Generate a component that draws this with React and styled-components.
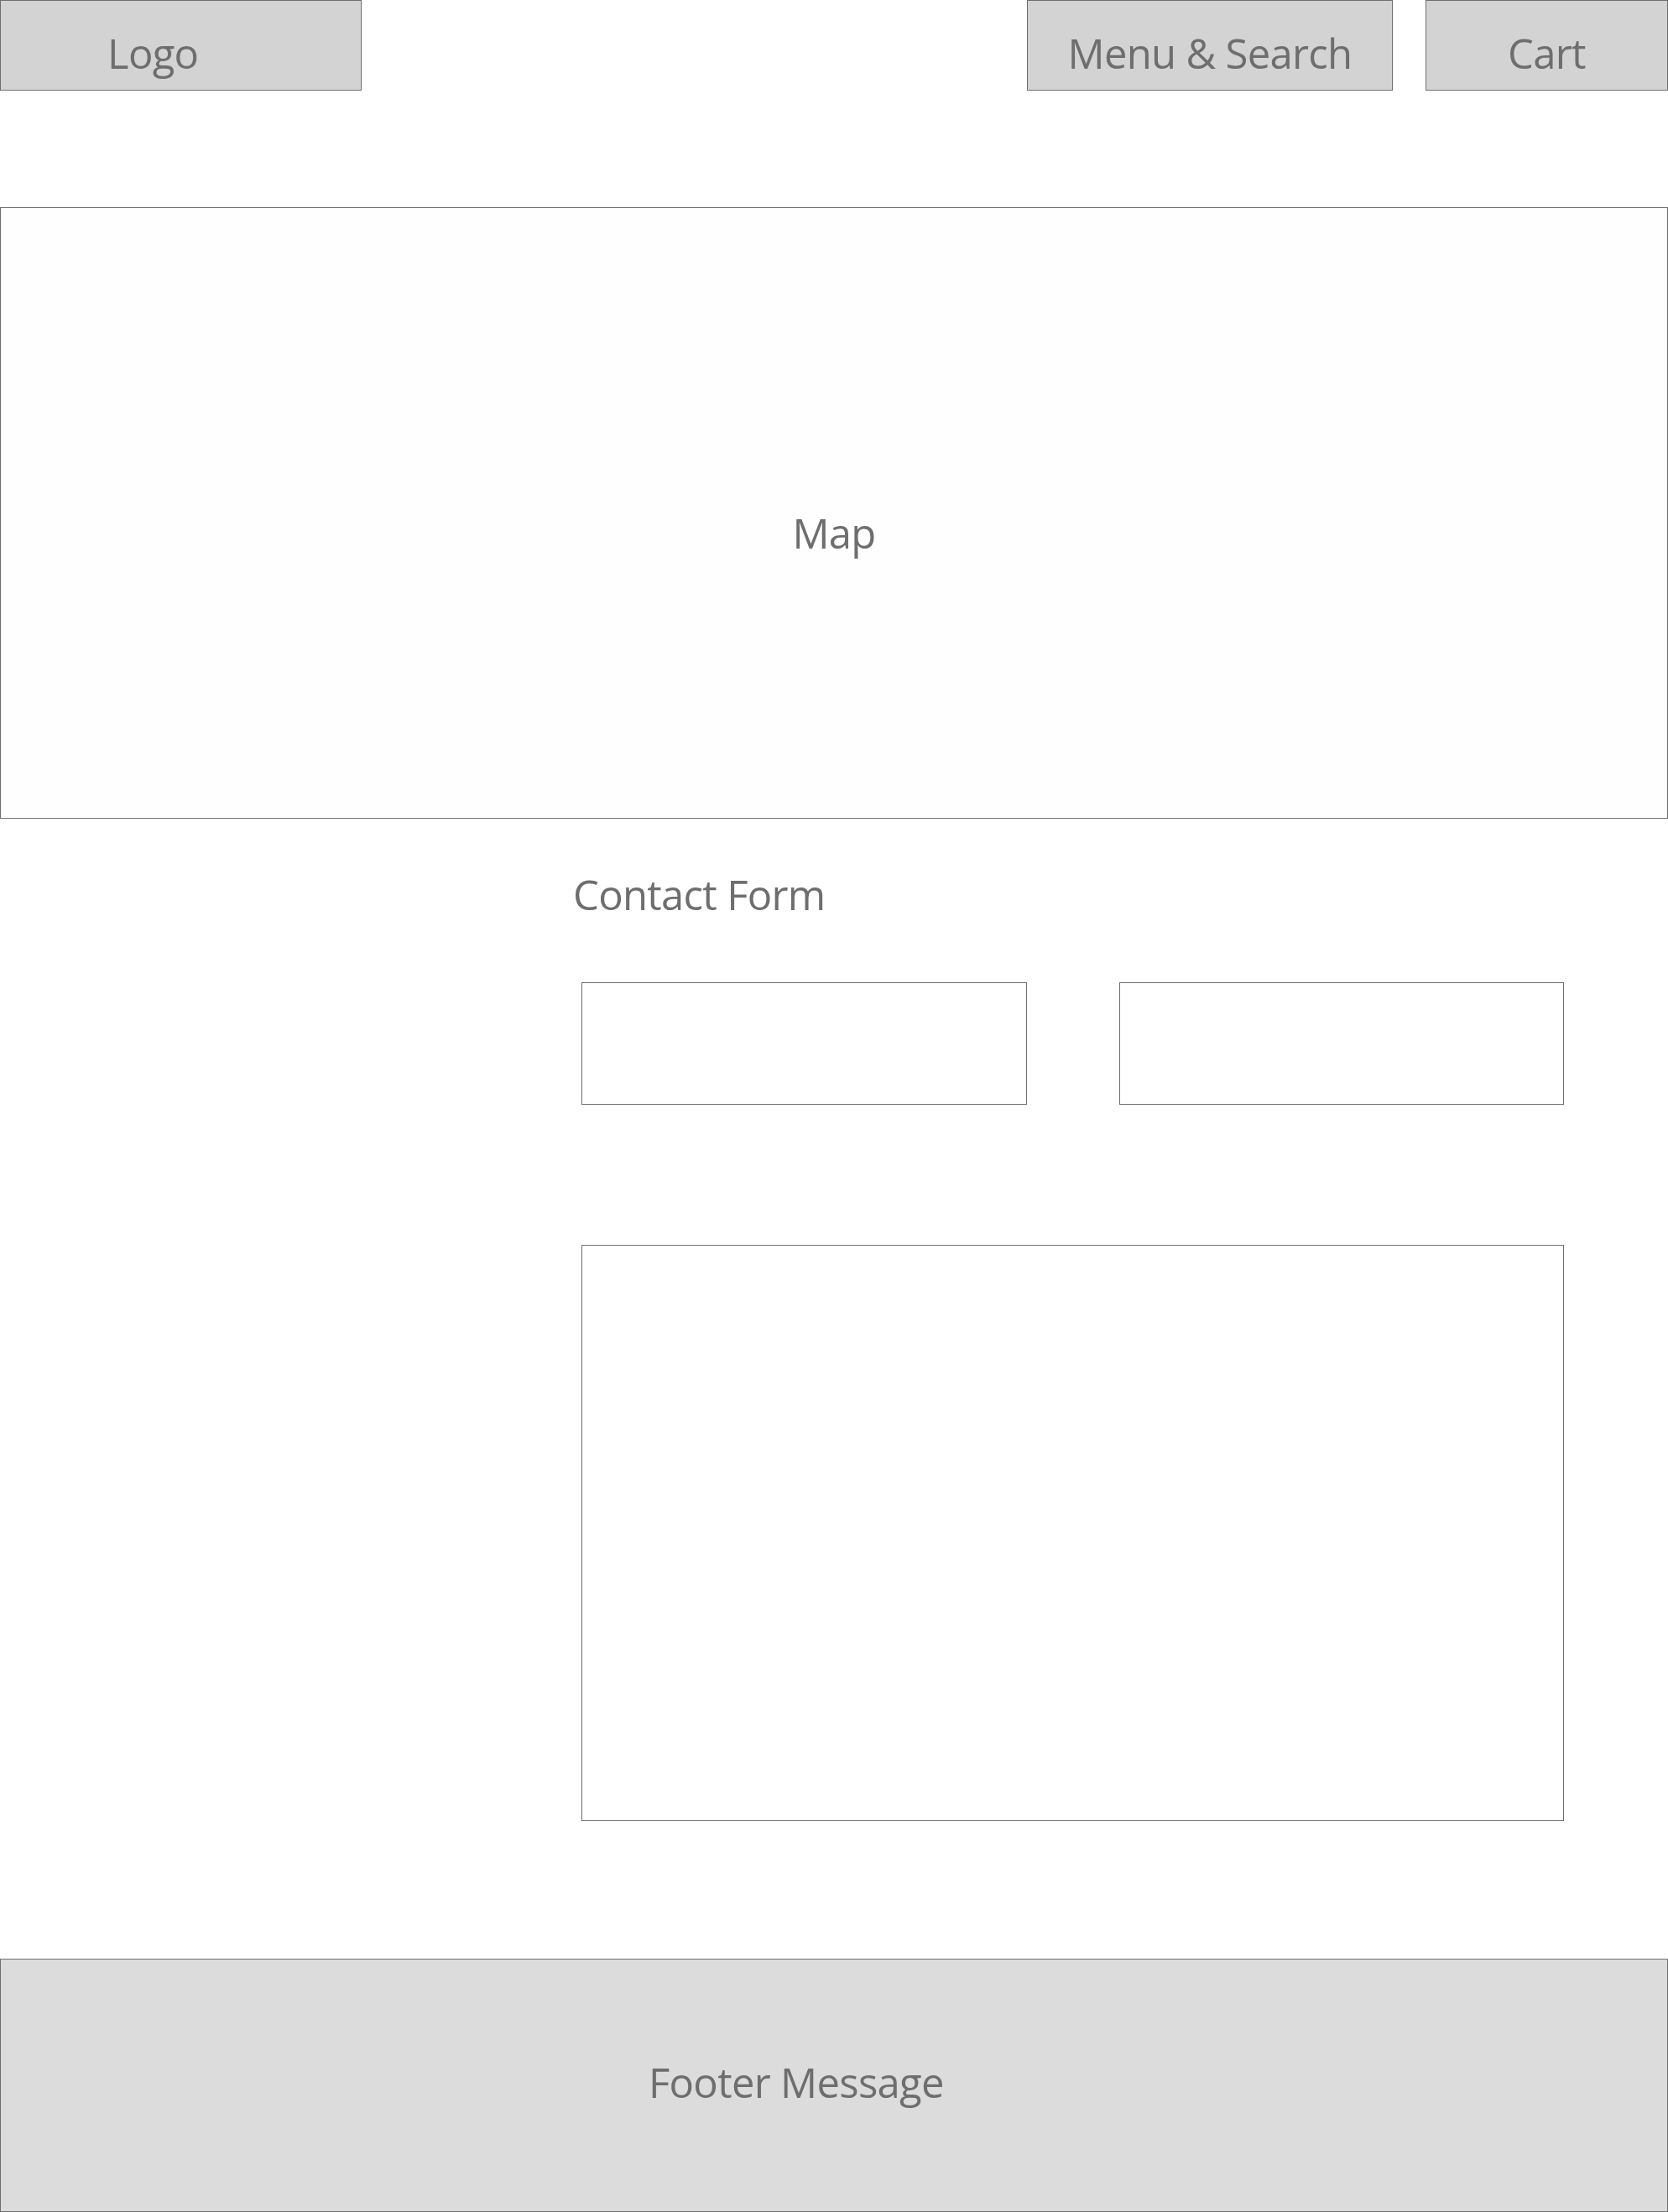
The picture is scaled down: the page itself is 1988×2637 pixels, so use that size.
import React from "react";
import styled, { createGlobalStyle } from "styled-components";

const Global = createGlobalStyle`
  *, *::before, *::after { box-sizing: border-box; }
  html, body { margin: 0; padding: 0; background: #ffffff; }
  body { font-family: "Open Sans", "Noto Sans", sans-serif; color: #6e6e6e; }
`;

const Page = styled.div`
  width: 1988px;
  display: flex;
  flex-direction: column;
`;

const Header = styled.header`
  display: flex;
  height: 108px;
`;

const HeaderBox = styled.div`
  width: ${(p) => p.$w}px;
  margin-left: ${(p) => p.$ml || 0}px;
  height: 108px;
  background: #d3d3d3;
  border: 1px solid #6e6e6e;
  display: flex;
  align-items: flex-start;
  justify-content: ${(p) => (p.$center ? "center" : "flex-start")};
  padding-left: ${(p) => p.$pl || 0}px;
  padding-top: 37px;
`;

const Label = styled.span`
  font-size: 49px;
  line-height: 50px;
  letter-spacing: -0.7px;
  color: #6e6e6e;
  white-space: nowrap;
`;

const Map = styled.section`
  margin-top: 139px;
  height: 729px;
  border: 1px solid #6e6e6e;
  background: #fefefe;
  display: flex;
  justify-content: center;
  align-items: flex-start;
  padding-top: 362px;
`;

const Heading = styled.h2`
  margin: 65px 0 0 683px;
  font-weight: 400;
  font-size: 49px;
  line-height: 50px;
  letter-spacing: -0.7px;
  color: #6e6e6e;
`;

const Form = styled.form`
  margin: 80px 0 0 693px;
  width: 1171px;
  display: flex;
  flex-direction: column;
  gap: 167px;
`;

const Row = styled.div`
  display: flex;
  gap: 110px;
`;

const Field = styled.input`
  width: ${(p) => p.$w}px;
  height: 146px;
  border: 1px solid #6e6e6e;
  background: #ffffff;
  border-radius: 0;
  outline: none;
  padding: 0;
  margin: 0;
  font: inherit;
`;

const Area = styled.textarea`
  display: block;
  width: 1171px;
  height: 687px;
  border: 1px solid #6e6e6e;
  background: #ffffff;
  border-radius: 0;
  outline: none;
  resize: none;
  padding: 0;
  margin: 0;
  font: inherit;
`;

const Footer = styled.footer`
  margin-top: 164px;
  height: 302px;
  background: #dcdcdc;
  border: 1px solid #6e6e6e;
  display: flex;
  align-items: center;
  padding-left: 772px;
  padding-bottom: 8px;
`;

export default function App() {
  return (
    <>
      <Global />
      <Page>
        <Header>
          <HeaderBox $w={431} $pl={127}>
            <Label>Logo</Label>
          </HeaderBox>
          <HeaderBox $w={436} $ml={793} $center>
            <Label>Menu &amp; Search</Label>
          </HeaderBox>
          <HeaderBox $w={289} $ml={39} $center>
            <Label>Cart</Label>
          </HeaderBox>
        </Header>
        <Map>
          <Label>Map</Label>
        </Map>
        <Heading>Contact Form</Heading>
        <Form onSubmit={(e) => e.preventDefault()}>
          <Row>
            <Field $w={531} />
            <Field $w={530} />
          </Row>
          <Area />
        </Form>
        <Footer>
          <Label>Footer Message</Label>
        </Footer>
      </Page>
    </>
  );
}
